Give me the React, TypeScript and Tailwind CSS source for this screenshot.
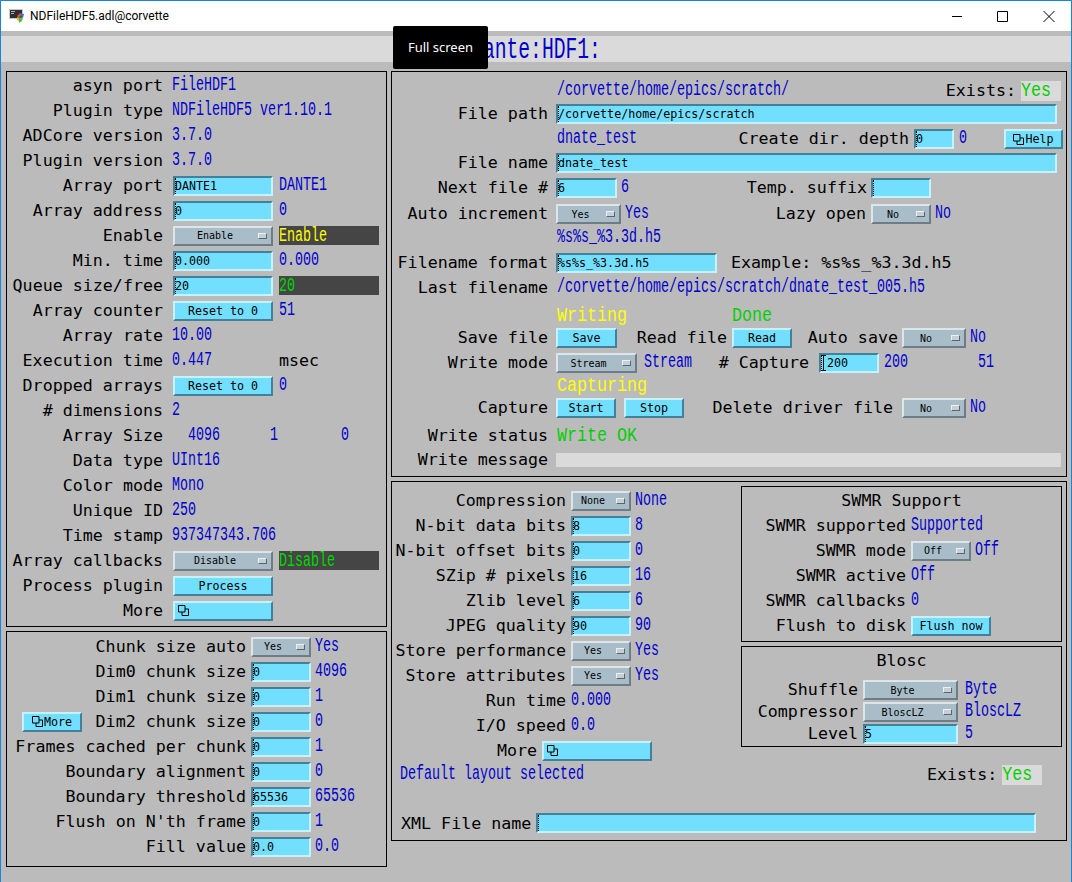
import type { ReactNode } from "react";

type P = { children?: ReactNode; className?: string };

function Label({ children, className = "" }: P) {
  return (
    <div className={`shrink-0 whitespace-pre text-right font-['DejaVu_Sans_Mono',monospace] text-[16.67px] leading-5 text-black ${className}`}>
      {children}
    </div>
  );
}

// the narrow, tall readback font
function Val({ children, className = "", color = "text-[#0000cc]" }: P & { color?: string }) {
  return (
    <div className={`shrink-0 whitespace-pre font-['Liberation_Mono',monospace] text-[13.33px] leading-5 ${color} ${className}`}>
      <span className="inline-block scale-y-[1.45]">{children}</span>
    </div>
  );
}

function Big({ children, className = "", color = "text-[#00d000]" }: P & { color?: string }) {
  return (
    <div className={`shrink-0 whitespace-pre font-['Liberation_Mono',monospace] text-[16.67px] leading-5 ${color} ${className}`}>
      <span className="inline-block scale-y-[1.2]">{children}</span>
    </div>
  );
}

function Input({ children, className = "" }: P) {
  return (
    <div className={`relative h-5 shrink-0 overflow-hidden whitespace-pre border-2 border-t-[#43809a] border-l-[#43809a] border-r-[#c6f2ff] border-b-[#c6f2ff] bg-[#73dfff] font-['DejaVu_Sans_Mono',monospace] text-[11.67px] leading-4 text-black ${className}`}>
      {children}
      <span className="absolute left-0 top-0 h-4 border-l border-dotted border-black" />
    </div>
  );
}

function Btn({ children, className = "" }: P) {
  return (
    <div className={`flex h-5 shrink-0 items-center justify-center whitespace-pre border-2 border-t-[#c6f2ff] border-l-[#c6f2ff] border-r-[#43809a] border-b-[#43809a] bg-[#73dfff] font-['DejaVu_Sans_Mono',monospace] text-[11.67px] leading-4 text-black ${className}`}>
      {children}
    </div>
  );
}

function Menu({ children, className = "" }: P) {
  return (
    <div className={`flex h-5 shrink-0 items-center border-2 border-t-[#dbe5ea] border-l-[#dbe5ea] border-r-[#6d7c85] border-b-[#6d7c85] bg-[#a8bdc7] font-['DejaVu_Sans_Mono',monospace] text-[10px] text-black ${className}`}>
      <span className="flex-1 pr-[3px] text-center">{children}</span>
      <span className="mr-[4px] h-[6px] w-[9px] border border-t-[#f0f0f0] border-l-[#f0f0f0] border-r-[#5a666d] border-b-[#5a666d] bg-[#c4d0d6]" />
    </div>
  );
}

function Rel({ className = "" }: P) {
  return (
    <svg width="11" height="11" viewBox="0 0 11 11" fill="none" stroke="black" strokeWidth="1" className={className}>
      <path d="M0.5 0.5h6.5v6.5h-6.5z" />
      <path d="M4 7v3.5h6.5v-6.5h-3.5" />
    </svg>
  );
}

function R({ children, className = "" }: P) {
  return <div className={`flex h-[25px] items-center ${className}`}>{children}</div>;
}

function T({ children, className = "" }: P) {
  return <div className={`flex h-5 items-center ${className}`}>{children}</div>;
}

function Panel({ children, className = "" }: P) {
  return <div className={`border border-black ${className}`}>{children}</div>;
}

function LeftTop() {
  const l = "w-[156px]";
  return (
    <Panel className="h-[556px] pt-px">
      <R><Label className={l}>asyn port</Label><Val className="ml-[9px]">FileHDF1</Val></R>
      <R><Label className={l}>Plugin type</Label><Val className="ml-[9px]">NDFileHDF5 ver1.10.1</Val></R>
      <R><Label className={l}>ADCore version</Label><Val className="ml-[9px]">3.7.0</Val></R>
      <R><Label className={l}>Plugin version</Label><Val className="ml-[9px]">3.7.0</Val></R>
      <R><Label className={l}>Array port</Label><Input className="ml-[10px] w-[100px]">DANTE1</Input><Val className="ml-[6px]">DANTE1</Val></R>
      <R><Label className={l}>Array address</Label><Input className="ml-[10px] w-[100px]">0</Input><Val className="ml-[6px]">0</Val></R>
      <R><Label className={l}>Enable</Label><Menu className="ml-[10px] w-[100px]">Enable</Menu><Val className="ml-[6px] h-[19px] w-[100px] bg-[#454545] pt-px" color="text-[#ffff00]">Enable</Val></R>
      <R><Label className={l}>Min. time</Label><Input className="ml-[10px] w-[100px]">0.000</Input><Val className="ml-[6px]">0.000</Val></R>
      <R><Label className={l}>Queue size/free</Label><Input className="ml-[10px] w-[100px]">20</Input><Val className="ml-[6px] h-[19px] w-[100px] bg-[#454545] pt-px" color="text-[#00d800]">20</Val></R>
      <R><Label className={l}>Array counter</Label><Btn className="ml-[10px] w-[100px]">Reset to 0</Btn><Val className="ml-[6px]">51</Val></R>
      <R><Label className={l}>Array rate</Label><Val className="ml-[9px]">10.00</Val></R>
      <R><Label className={l}>Execution time</Label><Val className="ml-[9px] w-[107px]">0.447</Val><Label>msec</Label></R>
      <R><Label className={l}>Dropped arrays</Label><Btn className="ml-[10px] w-[100px]">Reset to 0</Btn><Val className="ml-[6px]">0</Val></R>
      <R><Label className={l}># dimensions</Label><Val className="ml-[9px]">2</Val></R>
      <R><Label className={l}>Array Size</Label><Val className="ml-[25px] w-[82px]">4096</Val><Val className="w-[71px]">1</Val><Val>0</Val></R>
      <R><Label className={l}>Data type</Label><Val className="ml-[9px]">UInt16</Val></R>
      <R><Label className={l}>Color mode</Label><Val className="ml-[9px]">Mono</Val></R>
      <R><Label className={l}>Unique ID</Label><Val className="ml-[9px]">250</Val></R>
      <R><Label className={l}>Time stamp</Label><Val className="ml-[9px]">937347343.706</Val></R>
      <R><Label className={l}>Array callbacks</Label><Menu className="ml-[10px] w-[100px]">Disable</Menu><Val className="ml-[6px] h-[19px] w-[100px] bg-[#454545] pt-px" color="text-[#00d800]">Disable</Val></R>
      <R><Label className={l}>Process plugin</Label><Btn className="ml-[10px] w-[100px]">Process</Btn></R>
      <R><Label className={l}>More</Label><Btn className="ml-[10px] w-[100px] justify-start pl-[3px]"><Rel /></Btn></R>
    </Panel>
  );
}

function LeftBottom() {
  const l = "w-[239px]";
  return (
    <Panel className="h-[236px] pt-[2px]">
      <R><Label className={l}>Chunk size auto</Label><Menu className="ml-[5px] w-[60px]">Yes</Menu><Val className="ml-[4px]">Yes</Val></R>
      <R><Label className={l}>Dim0 chunk size</Label><Input className="ml-[5px] w-[60px]">0</Input><Val className="ml-[4px]">4096</Val></R>
      <R><Label className={l}>Dim1 chunk size</Label><Input className="ml-[5px] w-[60px]">0</Input><Val className="ml-[4px]">1</Val></R>
      <R>
        <Btn className="ml-[15px] w-[60px] gap-px"><Rel />More</Btn>
        <Label className="w-[164px]">Dim2 chunk size</Label>
        <Input className="ml-[5px] w-[60px]">0</Input><Val className="ml-[4px]">0</Val>
      </R>
      <R><Label className={l}>Frames cached per chunk</Label><Input className="ml-[5px] w-[60px]">0</Input><Val className="ml-[4px]">1</Val></R>
      <R><Label className={l}>Boundary alignment</Label><Input className="ml-[5px] w-[60px]">0</Input><Val className="ml-[4px]">0</Val></R>
      <R><Label className={l}>Boundary threshold</Label><Input className="ml-[5px] w-[60px]">65536</Input><Val className="ml-[4px]">65536</Val></R>
      <R><Label className={l}>Flush on N'th frame</Label><Input className="ml-[5px] w-[60px]">0</Input><Val className="ml-[4px]">1</Val></R>
      <R><Label className={l}>Fill value</Label><Input className="ml-[5px] w-[60px]">0.0</Input><Val className="ml-[4px]">0.0</Val></R>
    </Panel>
  );
}

function RightTop() {
  const l = "w-[156px]";
  return (
    <Panel className="h-[406px] pt-[7px]">
      <T className="items-start">
        <Val className="ml-[165px] mt-[2px]">/corvette/home/epics/scratch/</Val>
        <Label className="ml-auto mt-[2px]">Exists:</Label>
        <Big className="ml-[5px] mr-[5px] mt-[2px] h-5 w-10 bg-[#dadada]">Yes</Big>
      </T>
      <T className="mt-[5px]"><Label className={l}>File path</Label><Input className="ml-2 w-[501px]">/corvette/home/epics/scratch</Input></T>
      <T className="mt-[5px]">
        <Val className="ml-[165px] w-[100px]">dnate_test</Val>
        <Label className="w-[252px]">Create dir. depth</Label>
        <Input className="ml-[5px] w-10">0</Input>
        <Val className="ml-[5px] w-[40px]">0</Val>
        <Btn className="ml-[5px] w-[59px] gap-px"><Rel />Help</Btn>
      </T>
      <T className="mt-[4px]"><Label className={l}>File name</Label><Input className="ml-2 w-[501px]">dnate_test</Input></T>
      <T className="mt-[5px]">
        <Label className={l}>Next file #</Label>
        <Input className="ml-2 w-[61px]">6</Input>
        <Val className="ml-1 w-[39px]">6</Val>
        <Label className="w-[207px]">Temp. suffix</Label>
        <Input className="ml-1 w-[60px]" />
      </T>
      <T className="mt-[6px]">
        <Label className={l}>Auto increment</Label>
        <Menu className="ml-2 w-[65px]">Yes</Menu>
        <Val className="ml-1 w-[41px]">Yes</Val>
        <Label className="w-[200px]">Lazy open</Label>
        <Menu className="ml-[5px] w-[60px]">No</Menu>
        <Val className="ml-1">No</Val>
      </T>
      <T className="mt-[4px]"><Val className="ml-[165px]">%s%s_%3.3d.h5</Val></T>
      <T className="mt-[5px]">
        <Label className={l}>Filename format</Label>
        <Input className="ml-2 w-[161px]">%s%s_%3.3d.h5</Input>
        <Label className="ml-[14px]">Example: %s%s_%3.3d.h5</Label>
      </T>
      <T className="mt-[5px]"><Label className={l}>Last filename</Label><Val className="ml-[9px]">/corvette/home/epics/scratch/dnate_test_005.h5</Val></T>
      <T className="mt-[8px]">
        <Big className="ml-[165px] w-[175px]" color="text-[#ffff00]">Writing</Big>
        <Big>Done</Big>
      </T>
      <T className="mt-[2px]">
        <Label className={l}>Save file</Label>
        <Btn className="ml-2 w-[61px]">Save</Btn>
        <Label className="w-[110px]">Read file</Label>
        <Btn className="ml-[5px] w-[60px]">Read</Btn>
        <Label className="w-[106px]">Auto save</Label>
        <Menu className="ml-1 w-16">No</Menu>
        <Val className="ml-1">No</Val>
      </T>
      <T className="mt-[5px]">
        <Label className={l}>Write mode</Label>
        <Menu className="ml-2 w-[81px]">Stream</Menu>
        <Val className="ml-[7px] w-[67px]">Stream</Val>
        <Label className="w-[98px]"># Capture</Label>
        <Input className="ml-[10px] w-[60px] pl-[6px]">
          200
          <svg width="5" height="16" viewBox="0 0 5 16" fill="none" stroke="black" strokeWidth="1" className="absolute left-0 top-0">
            <path d="M0 0.5h5M0 15.5h5M2.5 0.5v15" />
          </svg>
        </Input>
        <Val className="ml-[5px] w-[94px]">200</Val>
        <Val>51</Val>
      </T>
      <T className="mt-[3px]"><Big className="ml-[165px]" color="text-[#ffff00]">Capturing</Big></T>
      <T className="mt-[2px]">
        <Label className={l}>Capture</Label>
        <Btn className="ml-2 w-[60px]">Start</Btn>
        <Btn className="ml-2 w-[60px]">Stop</Btn>
        <Label className="w-[209px]">Delete driver file</Label>
        <Menu className="ml-[9px] w-16">No</Menu>
        <Val className="ml-1">No</Val>
      </T>
      <T className="mt-[8px]"><Label className={l}>Write status</Label><Big className="ml-[9px]">Write OK</Big></T>
      <T className="mt-[4px]"><Label className={l}>Write message</Label><div className="ml-2 h-3.5 w-[505px] bg-[#dadada]" /></T>
    </Panel>
  );
}

function Compression() {
  const l = "w-[174px]";
  return (
    <div className="w-[349px] shrink-0 pt-[6px]">
      <R><Label className={l}>Compression</Label><Menu className="ml-[5px] w-[60px]">None</Menu><Val className="ml-1">None</Val></R>
      <R><Label className={l}>N-bit data bits</Label><Input className="ml-[5px] w-[60px]">8</Input><Val className="ml-1">8</Val></R>
      <R><Label className={l}>N-bit offset bits</Label><Input className="ml-[5px] w-[60px]">0</Input><Val className="ml-1">0</Val></R>
      <R><Label className={l}>SZip # pixels</Label><Input className="ml-[5px] w-[60px]">16</Input><Val className="ml-1">16</Val></R>
      <R><Label className={l}>Zlib level</Label><Input className="ml-[5px] w-[60px]">6</Input><Val className="ml-1">6</Val></R>
      <R><Label className={l}>JPEG quality</Label><Input className="ml-[5px] w-[60px]">90</Input><Val className="ml-1">90</Val></R>
      <R><Label className={l}>Store performance</Label><Menu className="ml-[5px] w-[60px]">Yes</Menu><Val className="ml-1">Yes</Val></R>
      <R><Label className={l}>Store attributes</Label><Menu className="ml-[5px] w-[60px]">Yes</Menu><Val className="ml-1">Yes</Val></R>
      <R><Label className={l}>Run time</Label><Val className="ml-[5px]">0.000</Val></R>
      <R><Label className={l}>I/O speed</Label><Val className="ml-[5px]">0.0</Val></R>
      <R><Label className="w-[145px]">More</Label><Btn className="ml-[5px] w-[110px] justify-start pl-[3px]"><Rel /></Btn></R>
    </div>
  );
}

function Swmr() {
  const l = "w-[164px]";
  return (
    <Panel className="h-[156px] pt-px">
      <R className="justify-center"><Label>SWMR Support</Label></R>
      <R><Label className={l}>SWMR supported</Label><Val className="ml-[5px]">Supported</Val></R>
      <R><Label className={l}>SWMR mode</Label><Menu className="ml-[5px] w-[60px]">Off</Menu><Val className="ml-1">Off</Val></R>
      <R><Label className={l}>SWMR active</Label><Val className="ml-[5px]">Off</Val></R>
      <R><Label className={l}>SWMR callbacks</Label><Val className="ml-[5px]">0</Val></R>
      <R><Label className={l}>Flush to disk</Label><Btn className="ml-[5px] w-20">Flush now</Btn></R>
    </Panel>
  );
}

function Blosc() {
  const l = "w-[116px]";
  return (
    <Panel className="h-[101px] pt-[4px]">
      <T className="justify-center"><Label>Blosc</Label></T>
      <T className="mt-[9px]"><Label className={l}>Shuffle</Label><Menu className="ml-[5px] w-[95px]">Byte</Menu><Val className="ml-[7px]">Byte</Val></T>
      <T className="mt-[2px]"><Label className={l}>Compressor</Label><Menu className="ml-[5px] w-[95px]">BloscLZ</Menu><Val className="ml-[7px]">BloscLZ</Val></T>
      <T className="mt-[2px]"><Label className={l}>Level</Label><Input className="ml-[5px] w-[95px]">5</Input><Val className="ml-[7px]">5</Val></T>
    </Panel>
  );
}

function RightBottom() {
  return (
    <Panel className="h-[360px]">
      <div className="flex items-start">
        <Compression />
        <div className="mt-1 flex w-[321px] shrink-0 flex-col gap-1">
          <Swmr />
          <Blosc />
        </div>
      </div>
      <T className="mt-[2px] items-start">
        <Val className="ml-2 w-[527px]">Default layout selected</Val>
        <Label>Exists:</Label>
        <Big className="ml-[5px] h-5 w-10 bg-[#dadada]">Yes</Big>
      </T>
      <T className="mt-[28px]">
        <Label className="ml-[9px] mt-[2px]">XML File name</Label>
        <Input className="ml-[5px] w-[500px]" />
      </T>
    </Panel>
  );
}

function TitleBar() {
  return (
    <div className="flex h-[30px] items-center bg-white">
      <svg width="16" height="14" viewBox="0 0 16 14" className="ml-[8px]">
        <rect x="0" y="0" width="14" height="10" fill="#c9c9c9" />
        <rect x="1" y="1" width="12" height="8" fill="#2e2e2e" />
        <path d="M2 2h4v1H2zM2 4h3v1H2z" fill="#b5b5b5" />
        <path d="M8 7l3-3 2 2-3 3z" fill="#e2483d" />
        <path d="M11 4l4 1-1 4-2-2z" fill="#3a6fd8" />
        <path d="M8 8l3 1-1 3-2-1z" fill="#f0a92c" />
        <path d="M10 9l4-1-1 4-3 2z" fill="#4fbf45" />
      </svg>
      <span className="ml-[5px] font-['Roboto',sans-serif] text-[12px] text-black">NDFileHDF5.adl@corvette</span>
      <svg width="104" height="14" viewBox="0 0 104 14" fill="none" stroke="black" strokeWidth="1" className="ml-auto mr-[15px]">
        <path d="M0 7.5h10" />
        <path d="M45.5 2.5h10v10h-10z" />
        <path d="M91.5 2l11 11M102.5 2l-11 11" />
      </svg>
    </div>
  );
}

export default function App() {
  return (
    <div className="relative h-[882px] w-[1072px] overflow-hidden border border-b-0 border-[#1a85d6] bg-[#bbbbbb]">
      <TitleBar />
      <div className="mt-[5px] flex h-[26px] items-center justify-center bg-[#dadada] pt-[6px] font-['Liberation_Mono',monospace] text-[19.67px] text-[#0000cc]">
        <span className="inline-block scale-y-150">dante:HDF1:</span>
      </div>
      <div className="mt-[9px] flex gap-1 px-[5px]">
        <div className="flex w-[381px] shrink-0 flex-col gap-1">
          <LeftTop />
          <LeftBottom />
        </div>
        <div className="flex w-[676px] shrink-0 flex-col gap-1">
          <RightTop />
          <RightBottom />
        </div>
      </div>
      <div className="absolute left-[392px] top-[25px] flex h-[43px] w-[95px] items-center justify-center rounded-[2px] bg-black font-['Noto_Sans',sans-serif] text-[13px] text-white">
        Full screen
      </div>
    </div>
  );
}
